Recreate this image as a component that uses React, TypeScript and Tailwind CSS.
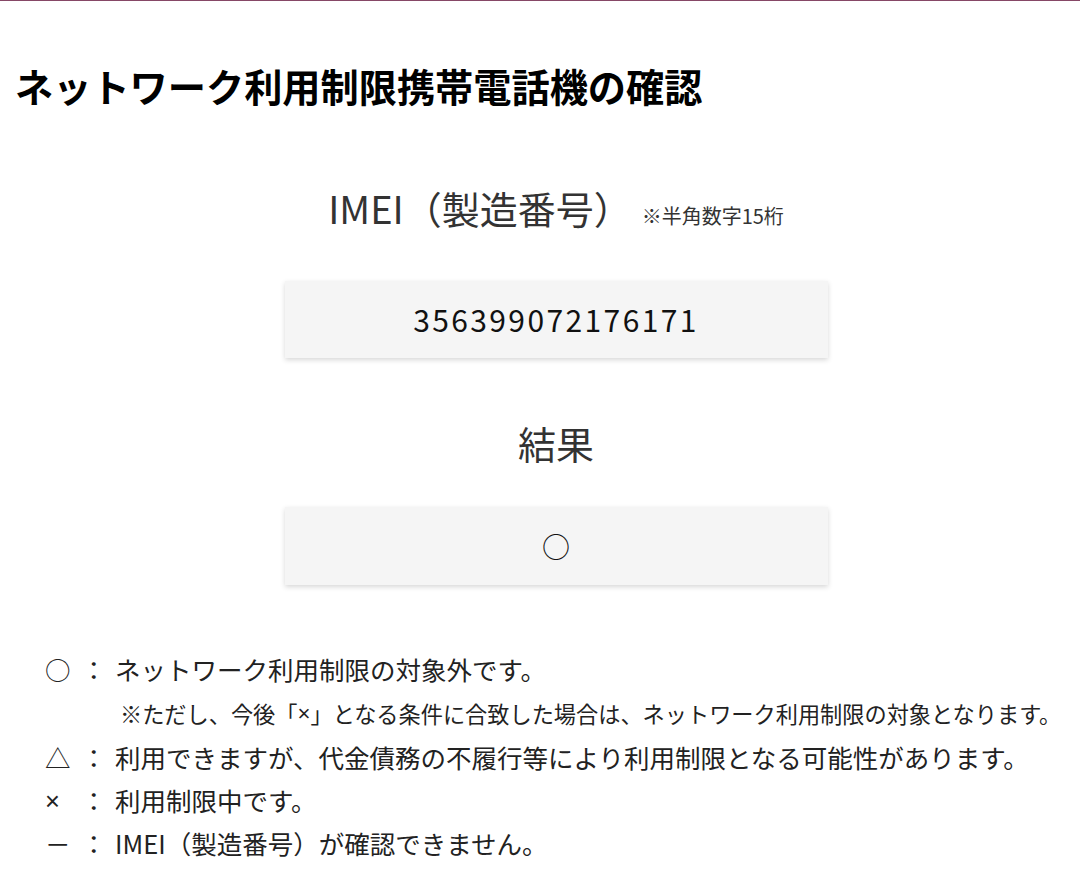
import React from 'react'

const font = { fontFamily: '"Noto Sans CJK JP", "Noto Sans", sans-serif' }

// small latin-looking multiplication sign, like in the reference
const Cross = () => <span style={{ fontFamily: '"Liberation Sans", sans-serif' }}>×</span>

const legend: Array<{ mark: React.ReactNode; key: string; text: string; note?: React.ReactNode }> = [
  {
    key: 'ok',
    mark: '○',
    text: 'ネットワーク利用制限の対象外です。',
    note: (
      <>
        ※ただし、今後「<Cross />」となる条件に合致した場合は、ネットワーク利用制限の対象となります。
      </>
    ),
  },
  { key: 'maybe', mark: '△', text: '利用できますが、代金債務の不履行等により利用制限となる可能性があります。' },
  { key: 'ng', mark: <Cross />, text: '利用制限中です。' },
  { key: 'none', mark: '－', text: 'IMEI（製造番号）が確認できません。' },
]

export default function App() {
  return (
    <div className="min-h-[884px] w-[1080px] bg-white border-t border-[#864866]" style={font}>
      {/* Page title */}
      <h1 className="pl-[15px] pt-[56px] text-[38.2px] font-bold leading-[57px] text-black">
        ネットワーク利用制限携帯電話機の確認
      </h1>

      {/* IMEI + result */}
      <div className="flex flex-col items-center pl-[32px]">
        <div className="mt-[67px] flex items-baseline text-[#333]">
          <span className="text-[38px] leading-[54px]">IMEI（製造番号）</span>
          <span className="ml-[10px] text-[20px]">※半角数字15桁</span>
        </div>

        <div className="mt-[46px] flex h-[77px] w-[543px] items-center justify-center bg-[#f5f5f5] shadow-[0_2px_5px_rgba(0,0,0,0.16)]">
          <span className="text-[30px] tracking-[0.08em] text-[#111]">356399072176171</span>
        </div>

        <div className="mt-[58px] text-[38px] leading-[54px] text-[#333]">結果</div>

        <div className="mt-[37px] flex h-[78px] w-[543px] items-center justify-center bg-[#f5f5f5] shadow-[0_2px_5px_rgba(0,0,0,0.16)]">
          <span className="text-[28px] text-[#111]">○</span>
        </div>
      </div>

      {/* Legend */}
      <div className="mt-[63px] pl-[45px] text-[#222]">
        {legend.map((item) => (
          <div key={item.key}>
            <div className="flex h-[43px] items-center text-[25.5px]">
              <span className="w-[36px]">{item.mark}</span>
              <span className="w-[24px] text-center">：</span>
              <span className="ml-[10px] whitespace-nowrap">{item.text}</span>
            </div>
            {item.note && (
              <div className="flex h-[45px] items-center pl-[75px] text-[22.2px] whitespace-nowrap">
                {item.note}
              </div>
            )}
          </div>
        ))}
      </div>
    </div>
  )
}
